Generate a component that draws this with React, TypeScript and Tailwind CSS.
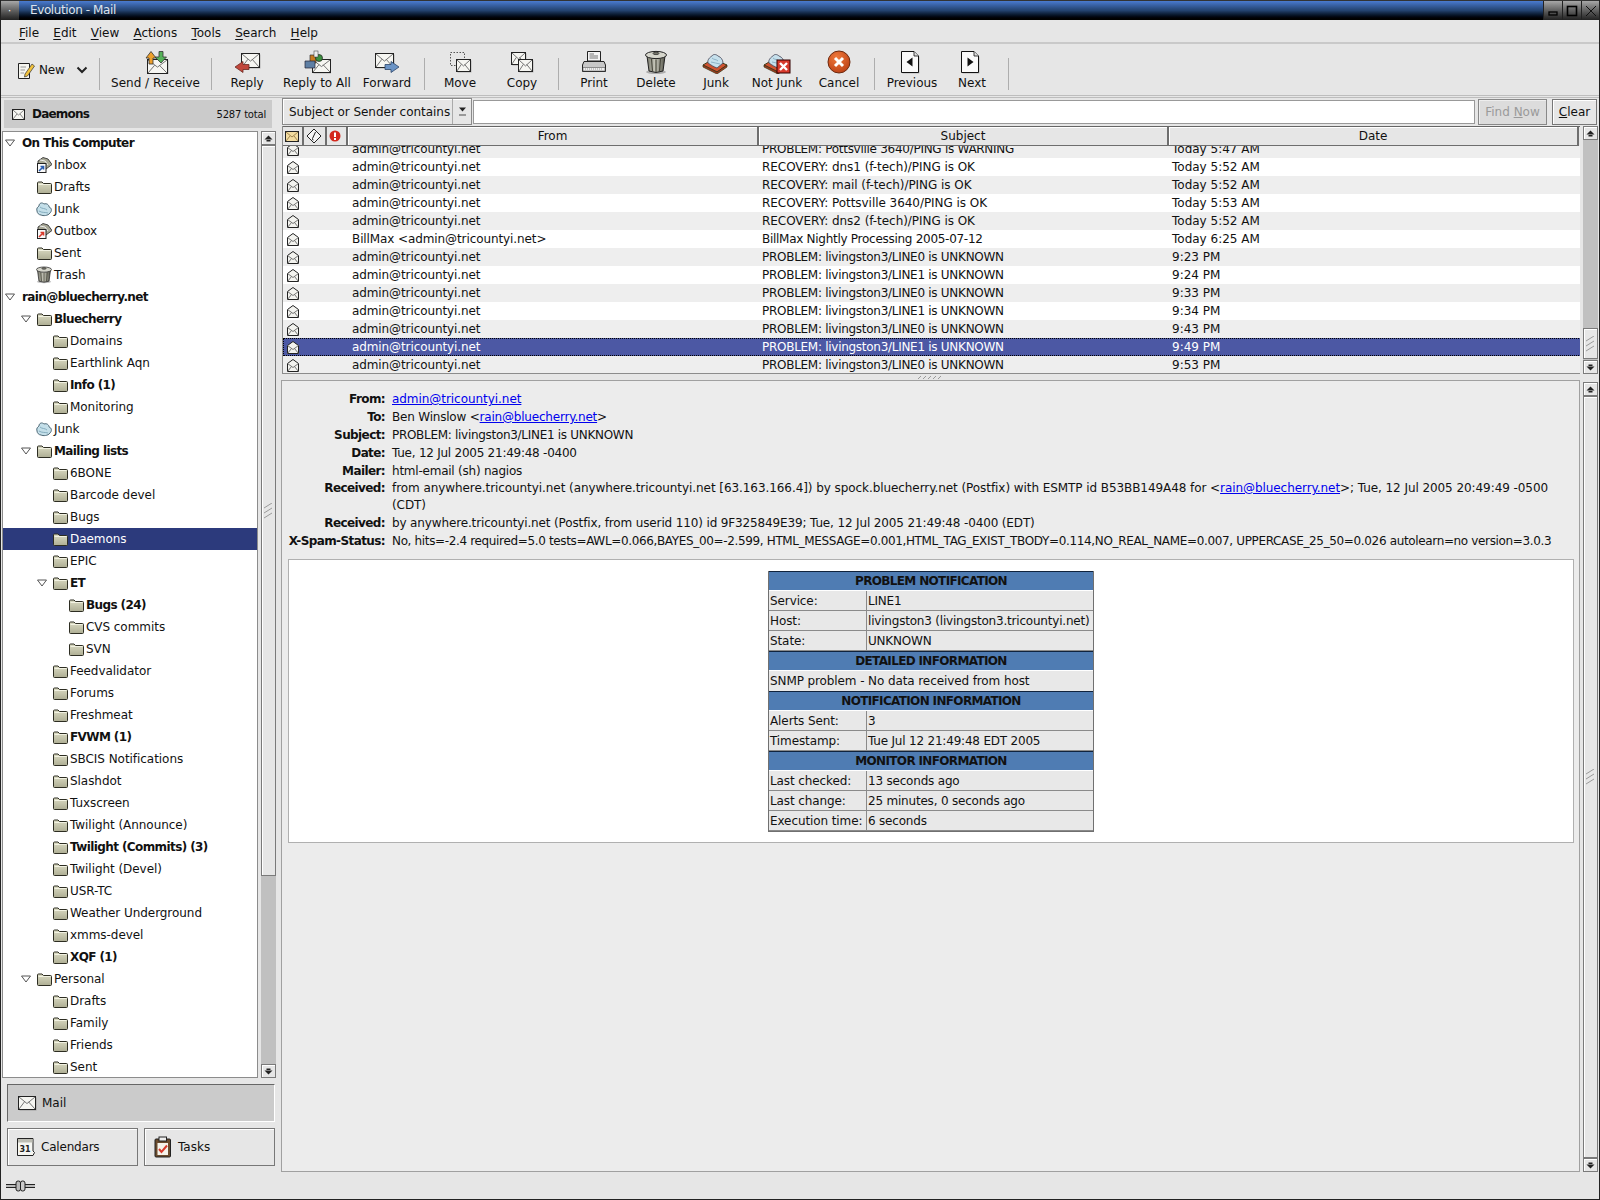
import React from "react";

const Env = ({ x, y, w, h, fill = "#f6f6f2" }: { x: number; y: number; w: number; h: number; fill?: string }) => (
  <g>
    <rect x={x + 1.5} y={y + 1.5} width={w} height={h} fill="#000" opacity="0.22" />
    <rect x={x + 0.5} y={y + 0.5} width={w} height={h} fill={fill} stroke="#222" />
    <path d={`M${x + 1} ${y + 1}L${x + w / 2 + 0.5} ${y + h * 0.58}L${x + w} ${y + 1}M${x + 1} ${y + h}L${x + w * 0.38} ${y + h * 0.45}M${x + w} ${y + h}L${x + w * 0.62} ${y + h * 0.45}`} fill="none" stroke="#666" strokeWidth="0.9" />
  </g>
);

const I = ({ children, w = 28, h = 24 }: { children: React.ReactNode; w?: number; h?: number }) => (
  <svg width={w} height={h} viewBox={`0 0 ${w} ${h}`} className="block shrink-0">{children}</svg>
);

const Can = ({ s = 1 }: { s?: number }) => (
  <g transform={`scale(${s})`}>
    <ellipse cx="14" cy="22" rx="10" ry="2" fill="#000" opacity="0.25" />
    <path d="M5 6L7 21Q14 24 21 21L23 6Z" fill="url(#can)" stroke="#222" />
    <path d="M9.5 9L10.5 21M14 9.5V22M18.5 9L17.5 21" stroke="#4c4c40" strokeWidth="1.2" fill="none" />
    <ellipse cx="14" cy="5" rx="10.5" ry="3.6" fill="#d6d6cc" stroke="#222" />
    <ellipse cx="14" cy="3.4" rx="3" ry="1.2" fill="#77776c" stroke="#222" strokeWidth="0.7" />
  </g>
);

const Tray = () => (
  <g>
    <path d="M1 15L11 9L25 15L15 22Z" fill="#cf5230" stroke="#331" strokeWidth="0.9" />
    <path d="M1 15L15 22L25 15V17L15 24L1 17Z" fill="#a53a20" stroke="#331" strokeWidth="0.7" />
    <path d="M6 13C5 10 8 7 10 6C11 4 14 4 16 6C19 7 21 10 21 13L15 18C12 17 9 15 6 13Z" fill="#c6e0ec" stroke="#445" strokeWidth="0.8" />
    <path d="M10 8C12 10 14 9 16 11M9 12C12 13 15 13 18 14" stroke="#7fa6bb" fill="none" strokeWidth="0.8" />
  </g>
);

const Page = ({ dir }: { dir: "l" | "r" }) => (
  <g>
    <path d="M3.5 1.5H16L20.5 6V22.5H3.5Z" fill="#000" opacity="0.2" transform="translate(1 1)" />
    <path d="M3.5 1.5H16L20.5 6V22.5H3.5Z" fill="#fafafa" stroke="#111" />
    <path d="M16 1.5V6H20.5" fill="#ddd" stroke="#111" strokeWidth="0.8" />
    <path d={dir === "l" ? "M14.5 7.5V16.5L8.5 12Z" : "M9.5 7.5V16.5L15.5 12Z"} fill="#111" />
  </g>
);

const icons: Record<string, React.ReactNode> = {
  send: (
    <I><Env x={5} y={9} w={20} h={14} />
      <path d="M4 8L9 1.5L14 8H11V14H7V8Z" fill="#eda02c" stroke="#333" strokeWidth="0.8" />
      <path d="M13 7H17V1.5H21V7H24.5L19 13Z" fill="#56b35a" stroke="#333" strokeWidth="0.8" /></I>
  ),
  reply: (
    <I><Env x={8} y={3} w={18} h={14} /><path d="M2 17L10 11.5V14.5H16V19.5H10V22.5Z" fill="#c1473c" stroke="#6b2a22" strokeWidth="0.8" /></I>
  ),
  replyall: (
    <I><Env x={9} y={9} w={18} h={13} />
      <path d="M7 5H13V13H7Z" fill="#c77a1f" stroke="#333" strokeWidth="0.7" />
      <circle cx="16" cy="8" r="3.5" fill="#3b8f3e" stroke="#222" strokeWidth="0.7" />
      <rect x="11" y="1" width="4" height="6" fill="#eee" stroke="#333" strokeWidth="0.5" />
      <path d="M2 11H12V18H2Z" fill="#5e7fa4" stroke="#223" strokeWidth="0.7" /></I>
  ),
  forward: (
    <I><Env x={2} y={3} w={18} h={14} /><path d="M26 17L18 11.5V14.5H12V19.5H18V22.5Z" fill="#6b94c6" stroke="#2c4568" strokeWidth="0.8" /></I>
  ),
  move: (
    <I><rect x="4.5" y="2.5" width="14" height="13" fill="none" stroke="#555" strokeDasharray="1.5 1.5" /><Env x={10} y={9} w={14} h={12} /></I>
  ),
  copy: (
    <I><Env x={3} y={2} w={14} h={12} /><Env x={10} y={9} w={14} h={12} /></I>
  ),
  print: (
    <I>
      <path d="M7.5 1.5H20.5V11H7.5Z" fill="#f4f4f4" stroke="#222" />
      <path d="M9.5 4H14M9.5 6H18M9.5 8H18" stroke="#777" />
      <path d="M4 11.5H24L25.5 15V21.5H2.5V15Z" fill="#c8c8c8" stroke="#222" />
      <path d="M3 17.5H25V21H3Z" fill="#f0f0f0" stroke="#555" strokeWidth="0.6" />
      <path d="M5 19H23" stroke="#999" strokeDasharray="1 1" />
    </I>
  ),
  trash: <I><Can /></I>,
  junk: <I><Tray /></I>,
  notjunk: (
    <I><Tray /><rect x="14" y="10" width="13" height="13" fill="#d83a2c" stroke="#300" /><path d="M17 13L24 20M24 13L17 20" stroke="#fff" strokeWidth="2.4" /></I>
  ),
  cancel: (
    <I>
      <circle cx="14" cy="12" r="11" fill="url(#canc)" stroke="#6d2a10" />
      <path d="M10 8L18 16M18 8L10 16" stroke="#fff" strokeWidth="3" />
    </I>
  ),
  prev: <I><Page dir="l" /></I>,
  next: <I><Page dir="r" /></I>,
};

const Folder = () => (
  <svg width="16" height="16" viewBox="0 0 16 16" className="block shrink-0">
    <path d="M1.5 4A1 1 0 0 1 2.5 3H6L7.5 4.5H14.5A1 1 0 0 1 15.5 5.5V13.5A1 1 0 0 1 14.5 14.5H2.5A1 1 0 0 1 1.5 13.5Z" fill="url(#fold)" stroke="#2d2d22" />
    <path d="M2.5 5.5H14.5" stroke="#f2f2e2" />
  </svg>
);

const Box = ({ c }: { c: string }) => (
  <svg width="16" height="16" viewBox="0 0 16 16" className="block shrink-0">
    <path d="M7 0.5L12 2L16 7.5L10 12H2V4Z" fill="#a8a896" stroke="#222" strokeWidth="0.8" />
    <path d="M4 3L9 4L12 8" fill="none" stroke="#eee" />
    <rect x="1.5" y="6.5" width="8.5" height="9" fill="#fafafa" stroke="#222" />
    <path d="M3 14L7 10M4.5 9.5H7.5V12.5" stroke={c} strokeWidth="1.6" fill="none" />
  </svg>
);

const JunkS = () => (
  <svg width="16" height="16" viewBox="0 0 16 16" className="block shrink-0">
    <path d="M1 10C0 7 2 6 3 5C3 2 6 1 8 3C11 2 13 4 13 6C16 7 16 10 14 12C12 15 7 15 5 14C3 14 1 12 1 10Z" fill="#c4dfe9" stroke="#4f6a78" />
    <path d="M4 6C6 8 9 7 11 9M3 10C6 12 9 11 12 12" stroke="#7ea7b9" fill="none" strokeWidth="0.9" />
  </svg>
);

const TrashS = () => (
  <svg width="16" height="18" viewBox="3 0 22 25" className="block shrink-0"><Can /></svg>
);

const FIcon = ({ k }: { k?: string }) => {
  if (k === "inbox") return <Box c="#2a5db0" />;
  if (k === "outbox") return <Box c="#d83a2c" />;
  if (k === "junk") return <JunkS />;
  if (k === "trash") return <TrashS />;
  return <Folder />;
};

const Tri = () => (
  <svg width="12" height="10" viewBox="0 0 12 10" className="block">
    <path d="M1.5 2H10.5L6 8Z" fill="#fff" stroke="#555" />
  </svg>
);

type N = { l: number; t: string; k?: string; b?: boolean; a?: boolean; s?: boolean };
const tree: N[] = [
  { l: 0, t: "On This Computer", b: true, a: true },
  { l: 1, t: "Inbox", k: "inbox" },
  { l: 1, t: "Drafts" },
  { l: 1, t: "Junk", k: "junk" },
  { l: 1, t: "Outbox", k: "outbox" },
  { l: 1, t: "Sent" },
  { l: 1, t: "Trash", k: "trash" },
  { l: 0, t: "rain@bluecherry.net", b: true, a: true },
  { l: 1, t: "Bluecherry", b: true, a: true },
  { l: 2, t: "Domains" },
  { l: 2, t: "Earthlink Aqn" },
  { l: 2, t: "Info (1)", b: true },
  { l: 2, t: "Monitoring" },
  { l: 1, t: "Junk", k: "junk" },
  { l: 1, t: "Mailing lists", b: true, a: true },
  { l: 2, t: "6BONE" },
  { l: 2, t: "Barcode devel" },
  { l: 2, t: "Bugs" },
  { l: 2, t: "Daemons", s: true },
  { l: 2, t: "EPIC" },
  { l: 2, t: "ET", b: true, a: true },
  { l: 3, t: "Bugs (24)", b: true },
  { l: 3, t: "CVS commits" },
  { l: 3, t: "SVN" },
  { l: 2, t: "Feedvalidator" },
  { l: 2, t: "Forums" },
  { l: 2, t: "Freshmeat" },
  { l: 2, t: "FVWM (1)", b: true },
  { l: 2, t: "SBCIS Notifications" },
  { l: 2, t: "Slashdot" },
  { l: 2, t: "Tuxscreen" },
  { l: 2, t: "Twilight (Announce)" },
  { l: 2, t: "Twilight (Commits) (3)", b: true },
  { l: 2, t: "Twilight (Devel)" },
  { l: 2, t: "USR-TC" },
  { l: 2, t: "Weather Underground" },
  { l: 2, t: "xmms-devel" },
  { l: 2, t: "XQF (1)", b: true },
  { l: 1, t: "Personal", a: true },
  { l: 2, t: "Drafts" },
  { l: 2, t: "Family" },
  { l: 2, t: "Friends" },
  { l: 2, t: "Sent" },
];
const indent = ["pl-[1px]", "pl-[17px]", "pl-[33px]", "pl-[49px]"];

const msgs: [string, string, string][] = [
  ["admin@tricountyi.net", "PROBLEM: Pottsville 3640/PING is WARNING", "Today 5:47 AM"],
  ["admin@tricountyi.net", "RECOVERY: dns1 (f-tech)/PING is OK", "Today 5:52 AM"],
  ["admin@tricountyi.net", "RECOVERY: mail (f-tech)/PING is OK", "Today 5:52 AM"],
  ["admin@tricountyi.net", "RECOVERY: Pottsville 3640/PING is OK", "Today 5:53 AM"],
  ["admin@tricountyi.net", "RECOVERY: dns2 (f-tech)/PING is OK", "Today 5:52 AM"],
  ["BillMax <admin@tricountyi.net>", "BillMax Nightly Processing 2005-07-12", "Today 6:25 AM"],
  ["admin@tricountyi.net", "PROBLEM: livingston3/LINE0 is UNKNOWN", "9:23 PM"],
  ["admin@tricountyi.net", "PROBLEM: livingston3/LINE1 is UNKNOWN", "9:24 PM"],
  ["admin@tricountyi.net", "PROBLEM: livingston3/LINE0 is UNKNOWN", "9:33 PM"],
  ["admin@tricountyi.net", "PROBLEM: livingston3/LINE1 is UNKNOWN", "9:34 PM"],
  ["admin@tricountyi.net", "PROBLEM: livingston3/LINE0 is UNKNOWN", "9:43 PM"],
  ["admin@tricountyi.net", "PROBLEM: livingston3/LINE1 is UNKNOWN", "9:49 PM"],
  ["admin@tricountyi.net", "PROBLEM: livingston3/LINE0 is UNKNOWN", "9:53 PM"],
];

const OpenMail = () => (
  <svg width="14" height="15" viewBox="0 0 14 15" className="block">
    <path d="M1.5 5.5L7 1.5L12.5 5.5V13.5H1.5Z" fill="#f3f3ef" stroke="#222" />
    <path d="M1.5 5.5L7 9.5L12.5 5.5M1.5 13.5L5.5 8.5M12.5 13.5L8.5 8.5" fill="none" stroke="#666" strokeWidth="0.9" />
  </svg>
);

const Arrow = ({ up }: { up?: boolean }) => (
  <div className="h-[14px] w-full bg-[#e6e6e6] border border-[#7a7a7a] shadow-[inset_1px_1px_0_#fff] flex items-center justify-center shrink-0">
    <svg width="9" height="7" viewBox="0 0 9 7" className="block">
      {up ? <path d="M4.5 0.5L8.5 4.5H0.5ZM2.5 5H6.5V6.5H2.5Z" fill="#222" /> : <path d="M4.5 6.5L8.5 2.5H0.5ZM2.5 0.5H6.5V2H2.5Z" fill="#222" />}
    </svg>
  </div>
);

const Grip = () => (
  <svg width="11" height="16" viewBox="0 0 11 16" className="block">
    <path d="M1 5L9 0M1 10L9 5M1 15L9 10" stroke="#9a9a9a" fill="none" />
  </svg>
);

const Sep = ({ className = "" }: { className?: string }) => <div className={`w-[1px] h-[32px] bg-[#adadad] shrink-0 mt-[8px] ${className}`} />;

const Tool = ({ ic, label, w }: { ic: string; label: string; w: string }) => (
  <div className={`${w} flex flex-col items-center shrink-0`}>
    <div className="h-[24px]">{icons[ic]}</div>
    <div className="mt-[1px] leading-[16px] whitespace-nowrap">{label}</div>
  </div>
);

const Menu = ({ t, className = "" }: { t: string; className?: string }) => (
  <span className={className}><span className="underline underline-offset-2">{t[0]}</span>{t.slice(1)}</span>
);

const Th = ({ t, c }: { t: string; c: string }) => (
  <td colSpan={2} className={`h-[20px] bg-[#4f7cb3] border-t border-t-[#10233d] border-b border-b-white text-center font-bold tracking-[-0.65px] p-0 leading-[18px] ${c}`}>{t}</td>
);
const Tr = ({ a, b }: { a: string; b: string }) => (
  <tr>
    <td className="h-[20px] w-[98px] bg-[#e8e8e8] border-b border-b-[#8a8a8a] border-r border-r-[#8a8a8a] pl-[1px] pr-0 py-0 leading-[18px] tracking-[-0.1px] whitespace-nowrap">{a}</td>
    <td className="h-[20px] bg-[#e8e8e8] border-b border-b-[#8a8a8a] pl-[1px] pr-0 py-0 leading-[18px] tracking-[-0.2px] whitespace-nowrap">{b}</td>
  </tr>
);

const Hd = ({ l, t = "", lead = "leading-[18px]", children }: { l: string; t?: string; lead?: string; children: React.ReactNode }) => (
  <div className={`flex ${lead}`}>
    <div className="w-[103px] shrink-0 text-right font-bold tracking-[-0.6px] whitespace-nowrap">{l}</div>
    <div className={`ml-[7px] flex-1 pr-[24px] ${t}`}>{children}</div>
  </div>
);
const A = ({ children }: { children: React.ReactNode }) => <a className="text-[#0000ee] underline">{children}</a>;

export default function App() {
  return (
    <div className="w-[1600px] h-[1200px] overflow-hidden relative flex flex-col bg-[#e6e6e6] text-[#111] text-[12px] [font-family:DejaVu_Sans,sans-serif] border-x border-b border-[#222]">
      <svg className="absolute w-0 h-0">
        <defs>
          <linearGradient id="fold" x1="0" y1="0" x2="0" y2="1"><stop offset="0" stopColor="#dcdcc4" /><stop offset="1" stopColor="#aeae94" /></linearGradient>
          <linearGradient id="can" x1="0" y1="0" x2="1" y2="0"><stop offset="0" stopColor="#77776a" /><stop offset="0.45" stopColor="#c8c8bc" /><stop offset="1" stopColor="#55554a" /></linearGradient>
          <radialGradient id="canc" cx="0.4" cy="0.3" r="0.8"><stop offset="0" stopColor="#f07a3c" /><stop offset="1" stopColor="#b83c12" /></radialGradient>
        </defs>
      </svg>

      <div className="h-[20px] shrink-0 flex bg-gradient-to-b from-[#4a7bd0] via-[#23426f] to-[#000] -mx-px border-t border-[#333]">
        <div className="w-[19px] bg-gradient-to-b from-[#a8a8a8] to-[#222] flex items-center justify-center text-white text-[10px] leading-none">·</div>
        <div className="ml-[11px] text-[#dde4ee] text-[12px] leading-[18px] tracking-[-0.4px]">Evolution - Mail</div>
        <div className="flex-1" />
        {["min", "max", "close"].map((k) => (
          <div key={k} className="w-[19px] border-l border-[#222] bg-gradient-to-b from-[#a8a8a8] to-[#222] flex items-center justify-center">
            <svg width="12" height="12" viewBox="0 0 12 12">
              {k === "min" && <rect x="2" y="7" width="8" height="3" fill="none" stroke="#000" strokeWidth="1.3" />}
              {k === "max" && <rect x="1.5" y="1.5" width="9" height="9" fill="none" stroke="#000" strokeWidth="1.6" />}
              {k === "close" && <path d="M1 1L11 11M11 1L1 11" stroke="#111" />}
            </svg>
          </div>
        ))}
      </div>

      <div className="h-[24px] shrink-0 flex items-center pl-[18px] gap-[14.2px] pt-[3px] border-b-2 border-[#c9c9c9]">
        {["File", "Edit", "View", "Actions", "Tools", "Search", "Help"].map((t) => <Menu key={t} t={t} />)}
      </div>

      <div className="h-[54px] shrink-0 flex pt-[6px] border-b-[3px] border-double border-[#bdbdbd]">
        <div className="w-[98px] shrink-0 flex items-center h-[40px] pl-[15px]">
          <svg width="20" height="20" viewBox="0 0 20 20" className="block shrink-0">
            <path d="M2.5 3.5H13.5V18.5H2.5Z" fill="#f6f6f0" stroke="#222" />
            <path d="M4.5 7H10M4.5 10H9M4.5 13H8" stroke="#999" />
            <path d="M9 14L16 4L18.5 6L11.5 16L8.5 17Z" fill="#f2c23c" stroke="#333" strokeWidth="0.7" />
          </svg>
          <span className="ml-[3px] tracking-[-0.2px]">New</span>
          <svg width="12" height="8" viewBox="0 0 12 8" className="ml-[11px] block shrink-0"><path d="M1.5 1.5L6 6L10.5 1.5" fill="none" stroke="#222" strokeWidth="2" /></svg>
        </div>
        <Sep />
        <Tool ic="send" label="Send / Receive" w="w-[111px]" />
        <Sep />
        <Tool ic="reply" label="Reply" w="w-[70px]" />
        <Tool ic="replyall" label="Reply to All" w="w-[70px]" />
        <Tool ic="forward" label="Forward" w="w-[70px]" />
        <Sep className="ml-[2px]" />
        <Tool ic="move" label="Move" w="w-[70px]" />
        <Tool ic="copy" label="Copy" w="w-[54px]" />
        <Sep className="ml-[9px]" />
        <Tool ic="print" label="Print" w="w-[70px]" />
        <Tool ic="trash" label="Delete" w="w-[54px]" />
        <Tool ic="junk" label="Junk" w="w-[66px]" />
        <Tool ic="notjunk" label="Not Junk" w="w-[56px]" />
        <Tool ic="cancel" label="Cancel" w="w-[68px]" />
        <Sep className="ml-[1px]" />
        <Tool ic="prev" label="Previous" w="w-[74px]" />
        <Tool ic="next" label="Next" w="w-[46px]" />
        <Sep className="ml-[13px]" />
      </div>

      <div className="flex-1 min-h-0 flex">
        <div className="w-[280px] shrink-0 flex flex-col">
          <div className="mt-[2px] ml-[3px] w-[268px] h-[28px] shrink-0 bg-[#cbcbcb] flex items-center pl-[8px] pr-[6px]">
            <svg width="13" height="11" viewBox="0 0 13 11" className="block shrink-0"><rect x="0.5" y="0.5" width="12" height="10" fill="#f6f6f2" stroke="#222" /><path d="M1 1L6.5 6L12 1M1 10L5 5M12 10L8 5" stroke="#666" fill="none" strokeWidth="0.8" /></svg>
            <span className="ml-[7px] font-bold tracking-[-0.8px] flex-1">Daemons</span>
            <span className="text-[10px] tracking-[-0.2px]">5287 total</span>
          </div>
          <div className="mt-[3px] h-[947px] shrink-0 flex ml-[1px]">
            <div className="w-[256px] border border-[#8c8c8c] bg-white overflow-hidden shrink-0">
              {tree.map((n, i) => (
                <div key={i} className={`h-[22px] flex items-center ${indent[n.l]} ${n.s ? "bg-[#2c3a7c] text-white" : ""} ${n.b ? "font-bold tracking-[-0.6px]" : "tracking-[-0.05px]"} whitespace-nowrap`}>
                  <div className="w-[12px] shrink-0">{n.a ? <Tri /> : null}</div>
                  {n.l > 0 ? <div className="ml-[4px] mr-[2px]"><FIcon k={n.k} /></div> : <div className="w-[6px]" />}
                  <span>{n.t}</span>
                </div>
              ))}
            </div>
            <div className="ml-[3px] w-[15px] h-[947px] flex flex-col bg-[#c0c0c0]">
              <Arrow up />
              <div className="h-[731px] bg-[#e6e6e6] border border-[#7a7a7a] shadow-[inset_1px_1px_0_#fff] flex items-center justify-center"><Grip /></div>
              <div className="flex-1" />
              <Arrow />
            </div>
          </div>
          <div className="mt-[6px] ml-[6px] w-[268px] h-[38px] shrink-0 bg-[#cbcbcb] border border-[#666] border-r-white border-b-white flex items-center pl-[9px]">
            <svg width="20" height="16" viewBox="0 0 20 16" className="block"><Env x={1} y={1} w={17} h={13} /></svg>
            <span className="ml-[5px]">Mail</span>
          </div>
          <div className="mt-[6px] ml-[6px] w-[268px] flex gap-[6px] shrink-0">
            <div className="w-[131px] h-[38px] border border-[#777] shadow-[inset_1px_1px_0_#fff] flex items-center pl-[8px]">
              <svg width="20" height="20" viewBox="0 0 20 20" className="block shrink-0">
                <path d="M1.5 1.5H17V14L18.5 15.5L17 18.5H1.5Z" fill="#f6f6f2" stroke="#222" />
                <rect x="2" y="2" width="14.5" height="3.5" fill="#bdbdb4" />
                <text x="3.5" y="14.5" fontSize="8" fontWeight="700" fill="#222">31</text>
              </svg>
              <span className="ml-[5px] tracking-[-0.2px]">Calendars</span>
            </div>
            <div className="w-[131px] h-[38px] border border-[#777] shadow-[inset_1px_1px_0_#fff] flex items-center pl-[9px]">
              <svg width="18" height="22" viewBox="0 0 18 22" className="block shrink-0">
                <rect x="1" y="3" width="15.5" height="18" rx="1" fill="#6b4b2d" stroke="#222" />
                <rect x="3.5" y="7" width="10.5" height="12" fill="#f6f3ea" />
                <rect x="5" y="1" width="7.5" height="4" fill="#eee" stroke="#222" />
                <path d="M5 13L7.5 16L13 9.5" fill="none" stroke="#d83a2c" strokeWidth="2" />
              </svg>
              <span className="ml-[6px]">Tasks</span>
            </div>
          </div>
        </div>

        <div className="flex-1 min-w-0 flex flex-col">
          <div className="h-[27px] shrink-0 flex items-center pl-[1px]">
            <div className="w-[190px] h-[27px] border border-[#8a8a8a] shadow-[inset_1px_1px_0_#fff] flex items-center pl-[6px] shrink-0">
              <span className="flex-1 whitespace-nowrap tracking-[-0.03px]">Subject or Sender contains</span>
              <div className="w-[19px] h-[25px] border-l border-[#aaa] flex flex-col items-center justify-center gap-[2px]">
                <svg width="9" height="5" viewBox="0 0 9 5" className="block"><path d="M1 0.5H8L4.5 4.5Z" fill="#222" /></svg>
                <div className="w-[7px] h-[2px] bg-[#999]" />
              </div>
            </div>
            <div className="ml-[1px] w-[1002px] h-[24px] bg-white border border-[#999] shrink-0" />
            <div className="ml-[3px] w-[69px] h-[26px] bg-[#dcdcdc] border border-[#888] shadow-[inset_1px_1px_0_#eee] flex items-center justify-center text-[#9a9a9a] shrink-0">Find&nbsp;<span className="underline">N</span>ow</div>
            <div className="ml-[5px] w-[45px] h-[26px] border border-[#777] shadow-[inset_1px_1px_0_#fff] flex items-center justify-center shrink-0"><span className="underline">C</span>lear</div>
          </div>

          <div className="mt-[1px] h-[248px] shrink-0 flex pl-[1px]">
            <div className="w-[1298px] border-l border-b border-[#8c8c8c] bg-white overflow-hidden flex flex-col shrink-0">
              <div className="h-[20px] shrink-0 flex bg-[#e6e6e6] relative z-10 border-t border-[#666]">
                {[0, 1, 2].map((k) => (
                  <div key={k} className={`${k === 2 ? "w-[21px]" : k === 1 ? "w-[23px]" : "w-[21px]"} border-r-2 border-b border-[#6e6e6e] flex items-center justify-center shrink-0`}>
                    {k === 0 && <svg width="14" height="11" viewBox="0 0 14 11" className="block mr-[2px]"><rect x="0.5" y="0.5" width="13" height="10" fill="#f3dca0" stroke="#222" /><path d="M1 1L7 6L13 1M1 10L5 5M13 10L9 5" stroke="#8a6f3a" fill="none" strokeWidth="0.8" /></svg>}
                    {k === 1 && <svg width="16" height="16" viewBox="0 0 16 16" className="block mr-[1px]"><path d="M8 1L15 8L8 15L1 8Z" fill="#f6f6f6" stroke="#222" /><path d="M9.5 4L6.5 10.5Q6 12 7.5 12" stroke="#222" fill="none" /></svg>}
                    {k === 2 && <svg width="12" height="12" viewBox="0 0 12 12" className="block mr-[3px]"><circle cx="6" cy="6" r="5.5" fill="#d4281c" /><rect x="5" y="2.5" width="2" height="4.5" fill="#fff" /><rect x="5" y="8" width="2" height="2" fill="#fff" /></svg>}
                  </div>
                ))}
                {[["From", "w-[411px]"], ["Subject", "w-[410px]"], ["Date", "w-[410px]"]].map(([t, w]) => (
                  <div key={t} className={`${w} border-r-2 border-b border-[#6e6e6e] shadow-[inset_1px_1px_0_#fff] flex items-center justify-center shrink-0`}>{t}</div>
                ))}
              </div>
              <div className="flex-1 min-h-0 overflow-hidden -mr-[1px]">
                <div className="-mt-[6px]">
                  {msgs.map((m, i) => {
                    const sel = i === 11;
                    const subj = m[1].startsWith("PROBLEM") || m[1].startsWith("BillMax") ? "tracking-[-0.28px]" : "tracking-[-0.05px]";
                    return (
                      <div key={i} className={`h-[18px] flex items-center whitespace-nowrap ${sel ? "bg-[#4c58a4] text-white outline-1 -outline-offset-1 outline-dotted outline-black" : i % 2 === 0 ? "bg-[#eeeeee]" : "bg-white"}`}>
                        <div className="w-[65px] pl-[3px] shrink-0"><OpenMail /></div>
                        <div className="w-[410px] pl-[4px] shrink-0 tracking-[-0.1px]">{m[0]}</div>
                        <div className={`w-[410px] pl-[4px] shrink-0 ${subj}`}>{m[1]}</div>
                        <div className="pl-[4px]">{m[2]}</div>
                      </div>
                    );
                  })}
                </div>
              </div>
            </div>
            <div className="ml-[3px] w-[15px] flex flex-col bg-[#c0c0c0]">
              <Arrow up />
              <div className="h-[188px]" />
              <div className="h-[31px] bg-[#e6e6e6] border border-[#7a7a7a] shadow-[inset_1px_1px_0_#fff] flex items-center justify-center"><Grip /></div>
              <div className="flex-1" />
              <Arrow />
            </div>
          </div>

          <div className="h-[6px] shrink-0 flex justify-center items-center pr-[20px]">
            <svg width="26" height="5" viewBox="0 0 26 5" className="block"><path d="M1 4L4 1M6 4L9 1M11 4L14 1M16 4L19 1M21 4L24 1" stroke="#999" /></svg>
          </div>

          <div className="flex-1 min-h-0 flex">
            <div className="w-[1299px] border border-[#a0a0a0] bg-[#ececec] pt-[9px] shrink-0">
              <Hd l="From:" t="tracking-[-0.05px]"><A>admin@tricountyi.net</A></Hd>
              <Hd l="To:" t="tracking-[-0.2px]">Ben Winslow &lt;<A>rain@bluecherry.net</A>&gt;</Hd>
              <Hd l="Subject:" t="tracking-[-0.3px]">PROBLEM: livingston3/LINE1 is UNKNOWN</Hd>
              <Hd l="Date:" t="tracking-[-0.25px]">Tue, 12 Jul 2005 21:49:48 -0400</Hd>
              <Hd l="Mailer:" t="tracking-[-0.23px]">html-email (sh) nagios</Hd>
              <Hd l="Received:" t="tracking-[-0.07px]" lead="leading-[17px]">from anywhere.tricountyi.net (anywhere.tricountyi.net [63.163.166.4]) by spock.bluecherry.net (Postfix) with ESMTP id B53BB149A48 for &lt;<A>rain@bluecherry.net</A>&gt;; Tue, 12 Jul 2005 20:49:49 -0500 (CDT)</Hd>
              <Hd l="Received:" t="tracking-[-0.14px]">by anywhere.tricountyi.net (Postfix, from userid 110) id 9F325849E39; Tue, 12 Jul 2005 21:49:48 -0400 (EDT)</Hd>
              <Hd l="X-Spam-Status:" t="tracking-[-0.35px]">No, hits=-2.4 required=5.0 tests=AWL=0.066,BAYES_00=-2.599, HTML_MESSAGE=0.001,HTML_TAG_EXIST_TBODY=0.114,NO_REAL_NAME=0.007, UPPERCASE_25_50=0.026 autolearn=no version=3.0.3</Hd>
              <div className="mt-[9px] ml-[6px] w-[1286px] h-[284px] bg-white border border-[#b0b0b0] pt-[11px] pl-[479px]">
                <table className="w-[326px] border-separate border-spacing-0 border border-[#707070] border-t-0 table-fixed">
                  <colgroup><col className="w-[98px]" /><col /></colgroup>
                  <tbody>
                    <tr><Th t="PROBLEM NOTIFICATION" c="" /></tr>
                    <Tr a="Service:" b="LINE1" />
                    <Tr a="Host:" b="livingston3 (livingston3.tricountyi.net)" />
                    <Tr a="State:" b="UNKNOWN" />
                    <tr><Th t="DETAILED INFORMATION" c="" /></tr>
                    <tr><td colSpan={2} className="h-[20px] bg-[#e8e8e8] pl-[1px] pr-0 py-0 leading-[18px] tracking-[-0.1px]">SNMP problem - No data received from host</td></tr>
                    <tr><Th t="NOTIFICATION INFORMATION" c="" /></tr>
                    <Tr a="Alerts Sent:" b="3" />
                    <Tr a="Timestamp:" b="Tue Jul 12 21:49:48 EDT 2005" />
                    <tr><Th t="MONITOR INFORMATION" c="" /></tr>
                    <Tr a="Last checked:" b="13 seconds ago" />
                    <Tr a="Last change:" b="25 minutes, 0 seconds ago" />
                    <Tr a="Execution time:" b="6 seconds" />
                  </tbody>
                </table>
              </div>
            </div>
            <div className="ml-[3px] mt-[2px] w-[15px] flex flex-col bg-[#c0c0c0]">
              <Arrow up />
              <div className="flex-1 bg-[#e6e6e6] border border-[#7a7a7a] shadow-[inset_1px_1px_0_#fff] flex items-center justify-center"><Grip /></div>
              <Arrow />
            </div>
          </div>
        </div>
      </div>

      <div className="h-[27px] shrink-0 flex items-center pl-[4px]">
        <svg width="31" height="12" viewBox="0 0 31 12" className="block">
          <path d="M1 6H30" stroke="#222" strokeWidth="4" />
          <path d="M1 6H30" stroke="#bbb" strokeWidth="2" />
          <rect x="11" y="1" width="4.5" height="10" rx="2" fill="#bbb" stroke="#222" />
          <rect x="15.5" y="1" width="4.5" height="10" rx="2" fill="#ccc" stroke="#222" />
        </svg>
      </div>
    </div>
  );
}
